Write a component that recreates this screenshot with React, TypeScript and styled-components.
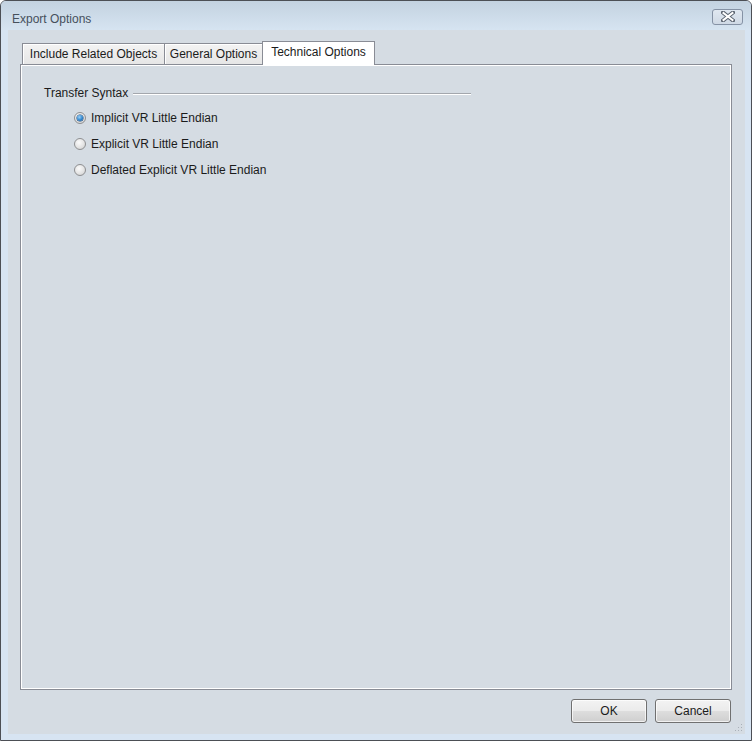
import React, { useState } from "react";
import styled, { createGlobalStyle } from "styled-components";

const Global = createGlobalStyle`
  html, body { margin: 0; padding: 0; background: #ffffff; }
  body { font-family: "Liberation Sans", "DejaVu Sans", sans-serif; font-size: 12px; color: #1b1b1b; }
  * { box-sizing: border-box; }
`;

const Window = styled.div`
  width: 752px;
  height: 741px;
  border: 1px solid #4c4f55;
  border-radius: 6px 6px 0 0;
  background: #d7e4f2;
  display: flex;
  flex-direction: column;
  overflow: hidden;
`;

const TitleBar = styled.div`
  height: 29px;
  flex: none;
  display: flex;
  align-items: center;
  justify-content: space-between;
  padding: 0 8px 0 11px;
  background: linear-gradient(#c3d2e0, #d6e4f1);
`;

const Title = styled.span`
  font-size: 12px;
  color: #46505c;
  margin-top: 6px;
`;

const CloseButton = styled.button`
  width: 31px;
  height: 16px;
  margin-top: 2px;
  padding: 0;
  border: 1px solid #8592a5;
  border-radius: 3px;
  background: linear-gradient(#e0e8f1, #cfd9e5);
  display: flex;
  align-items: center;
  justify-content: center;
`;

const Frame = styled.div`
  flex: 1;
  padding: 0 6px 6px 7px;
  display: flex;
`;

const Content = styled.div`
  flex: 1;
  position: relative;
  background: #d5dce3;
  display: flex;
  flex-direction: column;
  padding: 11px 13px 11px 12px;
`;

const TabBar = styled.div`
  display: flex;
  align-items: flex-end;
  height: 24px;
  padding-left: 2px;
  margin-bottom: -1px;
  position: relative;
  z-index: 1;
`;

const Tab = styled.div<{ $active?: boolean; $w: number }>`
  width: ${(p) => p.$w}px;
  height: ${(p) => (p.$active ? 24 : 22)}px;
  border: 1px solid #898c95;
  border-bottom: ${(p) => (p.$active ? "none" : "1px solid #898c95")};
  margin-left: -1px;
  background: ${(p) => (p.$active ? "#ffffff" : "linear-gradient(#f3f3f3, #e6e6e6)")};
  box-shadow: ${(p) => (p.$active ? "none" : "inset 1px 1px 0 #ffffff")};
  display: flex;
  align-items: center;
  justify-content: center;
  padding-bottom: ${(p) => (p.$active ? 3 : 0)}px;
  font-size: 12px;
  color: #1b1b1b;
  white-space: nowrap;
  &:first-child { margin-left: 0; }
`;

const Panel = styled.div`
  flex: 1;
  border: 1px solid #898c95;
  box-shadow: inset 0 0 0 1px #ffffff;
  padding: 20px 0 0 23px;
`;

const GroupHeader = styled.div`
  width: 427px;
  height: 16px;
  display: flex;
  align-items: center;
  gap: 5px;
`;

const GroupLabel = styled.span`
  font-size: 12px;
  color: #1b1b1b;
`;

const GroupLine = styled.div`
  flex: 1;
  height: 2px;
  border-top: 1px solid #a3a7ad;
  border-bottom: 1px solid #ffffff;
  margin-top: 1px;
`;

const RadioList = styled.div`
  display: flex;
  flex-direction: column;
  margin: 4px 0 0 30px;
`;

const RadioRow = styled.label`
  height: 26px;
  display: flex;
  align-items: center;
  gap: 5px;
  font-size: 12px;
  color: #1b1b1b;
  cursor: default;
`;

const RadioCircle = styled.span<{ $checked: boolean }>`
  width: 12px;
  height: 12px;
  border-radius: 50%;
  border: 1px solid #8e8f91;
  background: radial-gradient(circle at 40% 35%, #fbfbfb 0%, #e4e4e4 55%, #c9c9c9 100%);
  display: flex;
  align-items: center;
  justify-content: center;
  flex: none;
  &::after {
    content: "";
    display: ${(p) => (p.$checked ? "block" : "none")};
    width: 6px;
    height: 6px;
    border-radius: 50%;
    background: radial-gradient(circle at 40% 35%, #9fd3f7 0%, #2f86cf 55%, #174f8c 100%);
    box-shadow: 0 0 0 0.5px #123f70;
  }
`;

const ButtonRow = styled.div`
  display: flex;
  justify-content: flex-end;
  gap: 8px;
  margin-top: 9px;
  padding-right: 1px;
`;

const Button = styled.button`
  width: 76px;
  height: 24px;
  border: 1px solid #707070;
  border-radius: 3px;
  background: linear-gradient(#f3f3f3 0%, #ebebeb 48%, #dddddd 52%, #cfcfcf 100%);
  box-shadow: inset 0 0 0 1px rgba(255, 255, 255, 0.7);
  font-family: "Liberation Sans", "DejaVu Sans", sans-serif;
  font-size: 12px;
  color: #1b1b1b;
  padding: 0;
`;

const Grip = styled.svg`
  position: absolute;
  right: 2px;
  bottom: 2px;
`;

const options = [
  "Implicit VR Little Endian",
  "Explicit VR Little Endian",
  "Deflated Explicit VR Little Endian",
];

export default function App() {
  const [selected, setSelected] = useState(0);
  return (
    <>
      <Global />
      <Window>
        <TitleBar>
          <Title>Export Options</Title>
          <CloseButton aria-label="Close">
            <svg width="14" height="11" viewBox="0 0 14 11">
              <path
                d="M2 1.5 L12 9.5 M12 1.5 L2 9.5"
                stroke="#5b6470"
                strokeWidth="4"
                strokeLinecap="square"
              />
              <path
                d="M2.5 2 L11.5 9 M11.5 2 L2.5 9"
                stroke="#ffffff"
                strokeWidth="2"
                strokeLinecap="square"
              />
            </svg>
          </CloseButton>
        </TitleBar>
        <Frame>
          <Content>
            <TabBar>
              <Tab $w={143}>Include Related Objects</Tab>
              <Tab $w={99}>General Options</Tab>
              <Tab $w={113} $active>
                Technical Options
              </Tab>
            </TabBar>
            <Panel>
              <GroupHeader>
                <GroupLabel>Transfer Syntax</GroupLabel>
                <GroupLine />
              </GroupHeader>
              <RadioList>
                {options.map((o, i) => (
                  <RadioRow key={o} onClick={() => setSelected(i)}>
                    <RadioCircle $checked={selected === i} />
                    {o}
                  </RadioRow>
                ))}
              </RadioList>
            </Panel>
            <ButtonRow>
              <Button>OK</Button>
              <Button>Cancel</Button>
            </ButtonRow>
            <Grip width="8" height="8" viewBox="0 0 8 8">
              <rect x="6" y="0" width="1" height="1" fill="#a9b0b8" />
              <rect x="3" y="3" width="1" height="1" fill="#a9b0b8" />
              <rect x="6" y="3" width="1" height="1" fill="#a9b0b8" />
              <rect x="0" y="6" width="1" height="1" fill="#a9b0b8" />
              <rect x="3" y="6" width="1" height="1" fill="#a9b0b8" />
              <rect x="6" y="6" width="1" height="1" fill="#a9b0b8" />
            </Grip>
          </Content>
        </Frame>
      </Window>
    </>
  );
}
